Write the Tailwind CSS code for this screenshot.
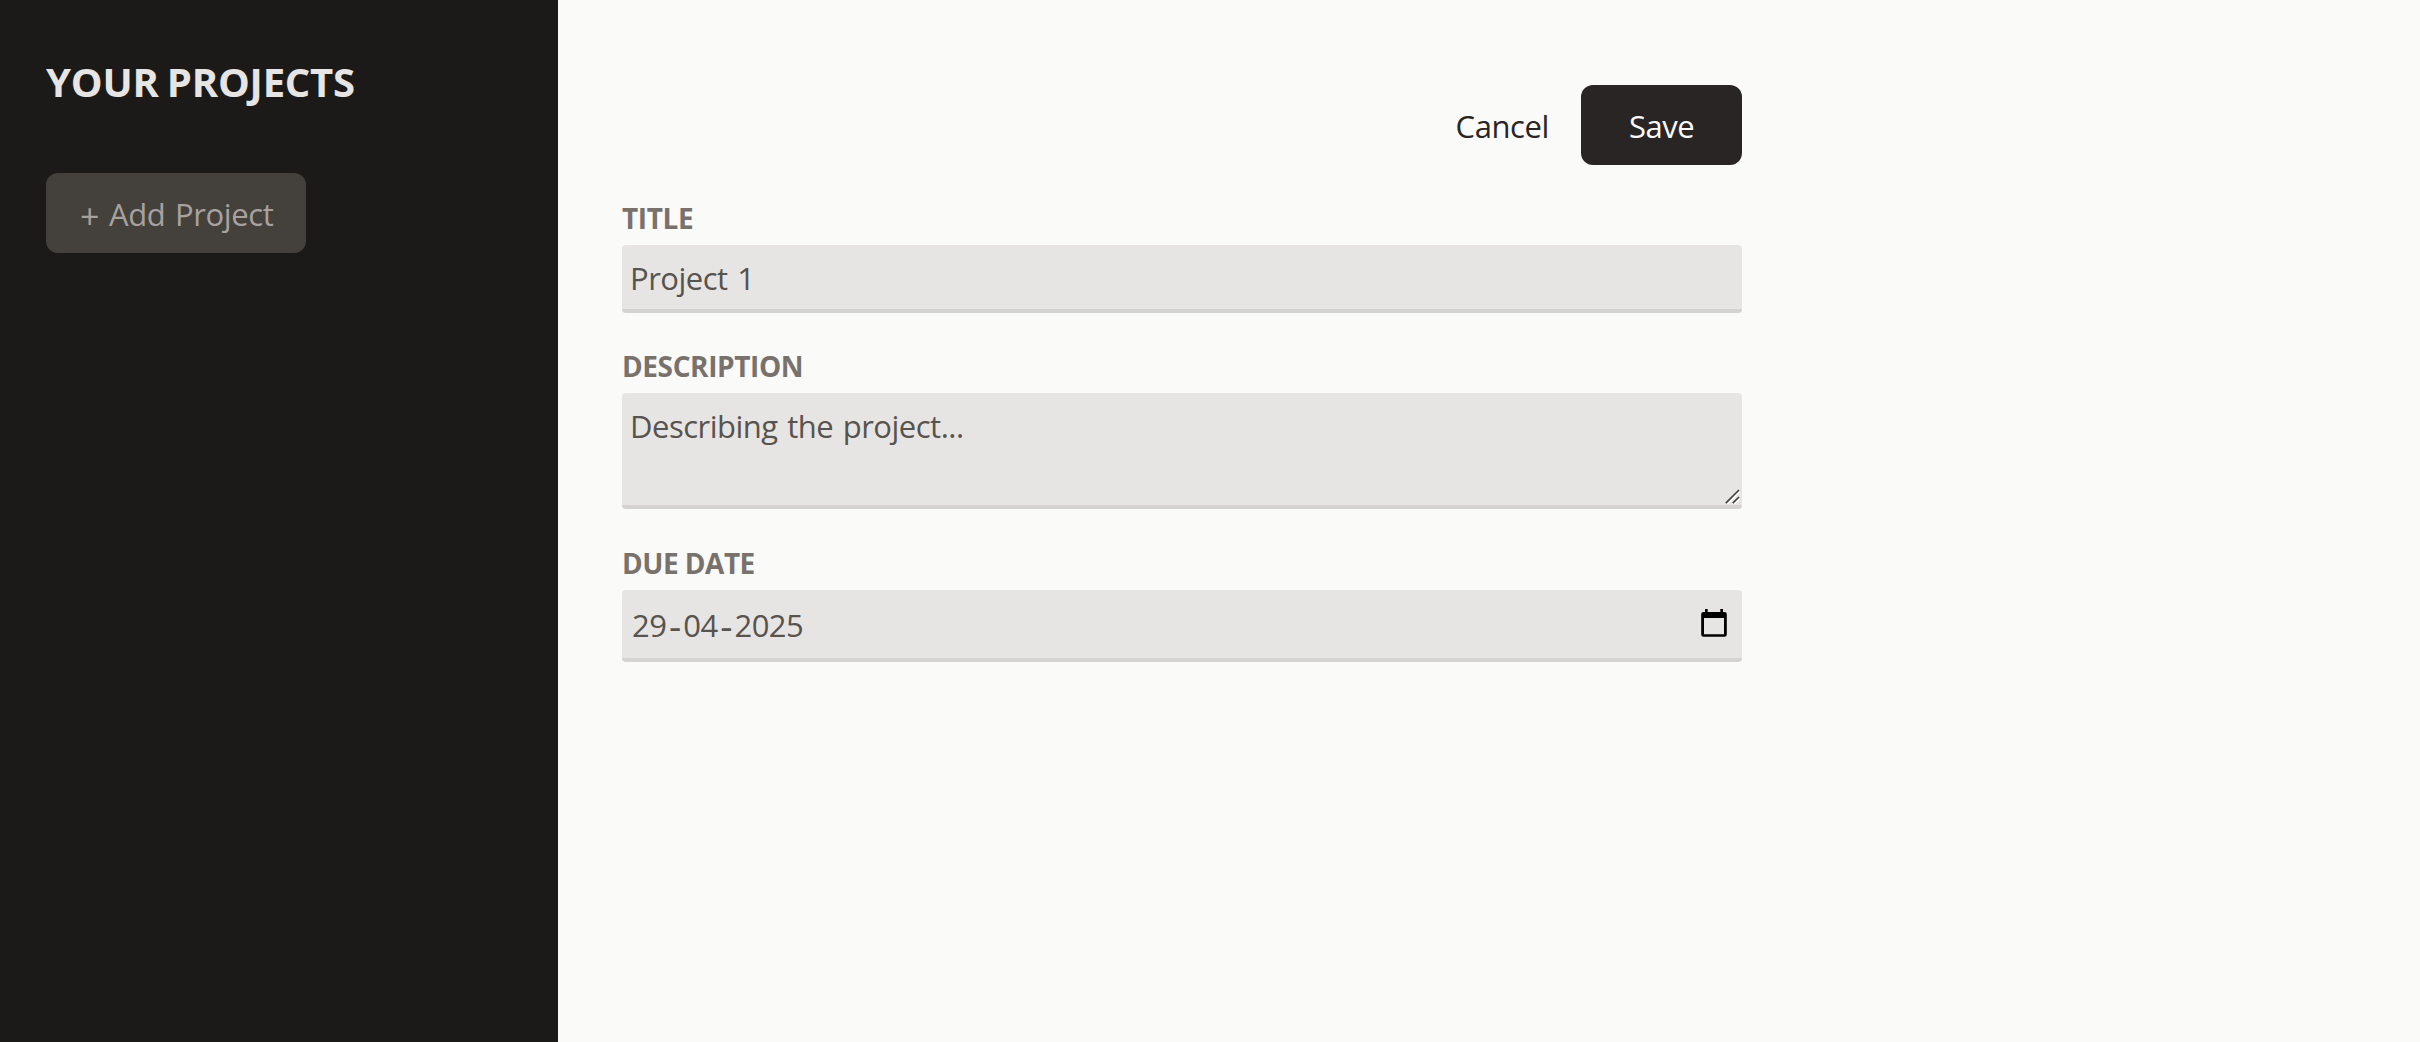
<!DOCTYPE html>
<html lang="en">
<head>
<meta charset="utf-8">
<title>Projects</title>
<script src="https://cdn.jsdelivr.net/npm/@tailwindcss/browser@4"></script>
</head>
<body class="bg-[#fafaf9] font-['Open_Sans','Noto_Sans',sans-serif] text-[31px] leading-[48px]">
<main class="flex h-screen overflow-hidden">
  <aside class="w-[558px] shrink-0 bg-[#1b1a18] pl-[46px] pt-[54px]">
    <h2 class="text-[40px] leading-[56px] font-bold tracking-[-0.2px] [word-spacing:-2px] text-[#e7e5e4] uppercase whitespace-nowrap">Your Projects</h2>
    <button class="mt-[63px] flex h-20 w-[260px] rounded-xl bg-[#44403c] pl-[34px] pt-[17px] tracking-[-0.4px] [word-spacing:2px] text-[#a8a29e] whitespace-nowrap"><span class="mr-[10px] pt-0.5 text-[34px]">+</span><span>Add Project</span></button>
  </aside>
  <section class="ml-16 w-[1120px] pt-[85px]">
    <menu class="flex justify-end">
      <li><button class="mr-8 h-20 pt-[17px] pb-[15px] tracking-[-0.4px] text-[#292524]">Cancel</button></li>
      <li><button class="h-20 w-[161px] rounded-xl bg-[#292524] pt-[17px] pb-[15px] tracking-[-0.5px] text-[#fafaf9]">Save</button></li>
    </menu>
    <div class="mt-[33px]">
      <p class="text-[28px] leading-10 font-bold tracking-[-0.4px] text-[#78716c]">TITLE</p>
      <div class="mt-[7px] h-[68px] rounded-sm border-b-4 border-[#d4d3d1] bg-[#e7e5e4] pl-2 pt-[9px] tracking-[-0.5px] [word-spacing:2px] text-[#57534e]">Project 1</div>
    </div>
    <div class="mt-[33px]">
      <p class="text-[28px] leading-10 font-bold tracking-[-0.4px] text-[#78716c]">DESCRIPTION</p>
      <div class="relative mt-[7px] h-[116px] rounded-sm border-b-4 border-[#d4d3d1] bg-[#e7e5e4] pl-2 pt-[9px] tracking-[-0.5px] [word-spacing:2px] text-[#57534e]">Describing the project...
        <svg class="absolute right-0.5 bottom-px" width="15" height="15" viewBox="0 0 15 15" fill="none" stroke-width="1.7"><path stroke="#fff" d="M2.500 15 15 2.500M9.500 15 15 9.500"/><path stroke="#454545" d="M.8 14.200 14 1M7.800 14.200 14 8"/></svg>
      </div>
    </div>
    <div class="mt-[34px]">
      <p class="text-[28px] leading-10 font-bold tracking-[-0.5px] text-[#78716c]">DUE DATE</p>
      <div class="mt-[7px] flex h-[72px] rounded-sm border-b-4 border-[#d4d3d1] bg-[#e7e5e4] pl-2.5 pr-[15px] pt-[11px] tracking-[-0.6px] text-[#57534e]">
        <span>29</span><span class="w-[17px] text-center text-[38px]">-</span><span>04</span><span class="w-[17px] text-center text-[38px]">-</span><span>2025</span>
        <svg class="ml-auto mt-2" width="26" height="28" viewBox="0 0 26 28"><path fill="#000" fill-rule="evenodd" d="M4 0h2.700v3h12.600V0H22v3h1.500A2.300 2.300 0 0 1 25.800 5.300V25.500A2.300 2.300 0 0 1 23.500 27.800H2.500A2.300 2.300 0 0 1 .2 25.500V5.300A2.300 2.300 0 0 1 2.500 3H4ZM3 9V25.200H23V9Z"/></svg>
      </div>
    </div>
  </section>
</main>
</body>
</html>
